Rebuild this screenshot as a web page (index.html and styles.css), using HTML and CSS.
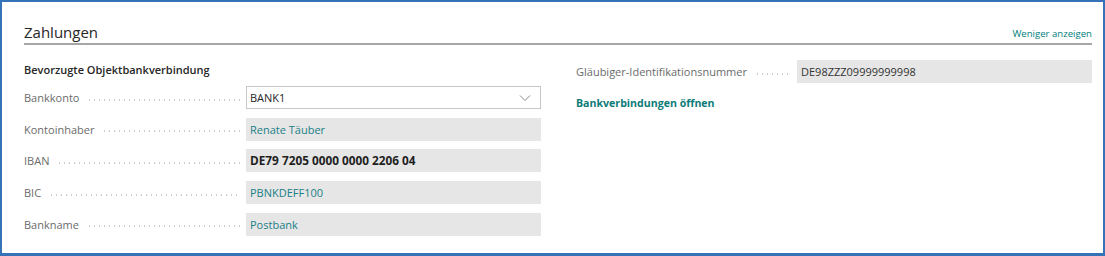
FILE: index.html
```html
<!DOCTYPE html>
<html lang="de">
<head>
<meta charset="utf-8">
<link rel="stylesheet" href="styles.css">
</head>
<body>
<div class="frame">
  <div class="card">
    <div class="header">
      <h2 class="title">Zahlungen</h2>
      <a class="toggle">Weniger anzeigen</a>
    </div>
    <div class="cols">
      <div class="col">
        <div class="group">Bevorzugte Objektbankverbindung</div>
        <div class="row">
          <span class="label">Bankkonto</span>
          <div class="select"><span>BANK1</span>
            <svg class="chev" width="12" height="8" viewBox="0 0 12 8"><path d="M1 1.5 L6 6.5 L11 1.5" fill="none" stroke="#8a8a8a" stroke-width="1"/></svg>
          </div>
        </div>
        <div class="row">
          <span class="label">Kontoinhaber</span>
          <div class="value link">Renate Täuber</div>
        </div>
        <div class="row">
          <span class="label">IBAN</span>
          <div class="value strong">DE79 7205 0000 0000 2206 04</div>
        </div>
        <div class="row">
          <span class="label">BIC</span>
          <div class="value link">PBNKDEFF100</div>
        </div>
        <div class="row">
          <span class="label">Bankname</span>
          <div class="value link">Postbank</div>
        </div>
      </div>
      <div class="col right">
        <div class="row">
          <span class="label">Gläubiger-Identifikationsnummer</span>
          <div class="value">DE98ZZZ09999999998</div>
        </div>
        <a class="action">Bankverbindungen öffnen</a>
      </div>
    </div>
  </div>
</div>
</body>
</html>
```
FILE: styles.css
```css
* { box-sizing: border-box; }
html, body { margin: 0; padding: 0; background: #ffffff; }
body { font-family: "Open Sans", "Noto Sans", sans-serif; color: #212121; }

.frame {
  width: 1105px;
  height: 256px;
  border: 2px solid #3572b8;
  border-bottom-width: 3px;
  background: #ffffff;
  padding: 0 11px 0 22px;
}

.card { display: flex; flex-direction: column; }

.header {
  display: flex;
  align-items: flex-end;
  justify-content: space-between;
  border-bottom: 2px solid #a6a6a6;
  height: 43px;
  padding-bottom: 1px;
}
.title {
  margin: 0;
  font-size: 15px;
  font-weight: 400;
  color: #262626;
  line-height: 20px;
}
.toggle {
  font-size: 9.6px;
  color: #00807d;
  line-height: 14px;
  padding-bottom: 1px;
}

.cols {
  display: grid;
  grid-template-columns: 517px 517px;
  column-gap: 35px;
  padding-top: 15px;
}
.col { display: flex; flex-direction: column; }

.group {
  font-size: 11px;
  font-weight: 600;
  color: #262626;
  height: 22px;
  line-height: 20px;
}

.row {
  display: flex;
  align-items: center;
  height: 31.6px;
}
.right .row { height: 25px; margin-top: -1px; }
.right .label { width: 221px; }

.label {
  width: 222px;
  flex: none;
  display: flex;
  align-items: center;
  font-size: 11px;
  color: #6b6b6b;
  white-space: nowrap;
  padding-right: 6px;
}
.label::after {
  content: "";
  flex: 1;
  margin-left: 8px;
  height: 2px;
  margin-top: 4px;
  background-image: radial-gradient(circle, #cccccc 0.6px, transparent 0.9px);
  background-size: 5px 2px;
  background-repeat: repeat-x;
}

.value, .select {
  width: 295px;
  height: 23px;
  background: #e6e6e6;
  font-size: 11px;
  line-height: 23px;
  padding: 0 4px;
  color: #333333;
}
.select {
  background: #ffffff;
  border: 1px solid #c6c6c6;
  display: flex;
  align-items: center;
  justify-content: space-between;
  padding: 0 9px 0 3px;
  color: #262626;
}
.chev { display: block; }
.link { color: #1a7f86; }
.strong { font-weight: 700; color: #1f1f1f; font-size: 11.8px; }

.action {
  margin-top: 12px;
  font-size: 10.6px;
  font-weight: 700;
  color: #0c7b78;
}
```
